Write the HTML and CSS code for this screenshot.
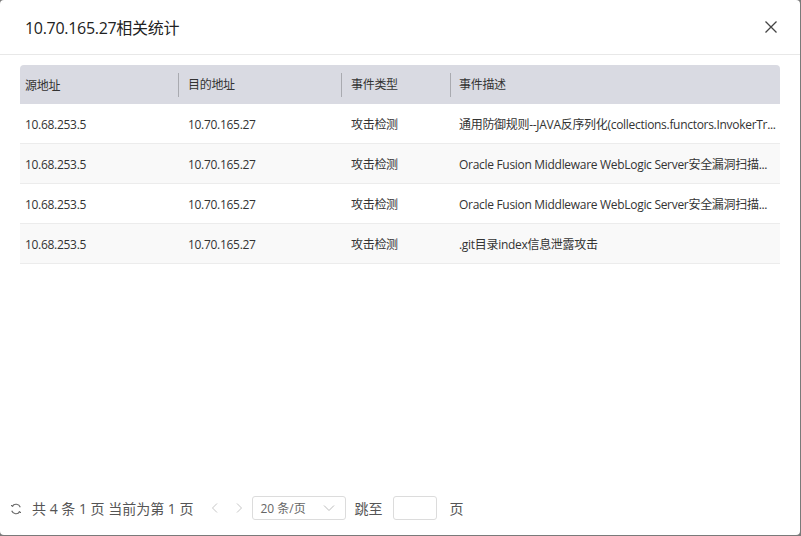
FILE: index.html
```html
<!DOCTYPE html>
<html lang="zh">
<head>
<meta charset="utf-8">
<link rel="stylesheet" href="styles.css">
</head>
<body>
<div class="modal">
  <div class="modal-header">
    <div class="modal-title">10.70.165.27相关统计</div>
    <svg class="close" width="14" height="14" viewBox="0 0 14 14"><path d="M1.5 1.5 L12.5 12.5 M12.5 1.5 L1.5 12.5" stroke="#444" stroke-width="1.3" fill="none"/></svg>
  </div>
  <div class="modal-body">
    <div class="table">
      <div class="thead">
        <div class="cell c1">源地址</div>
        <div class="cell c2 sep">目的地址</div>
        <div class="cell c3 sep">事件类型</div>
        <div class="cell c4 sep">事件描述</div>
      </div>
      <div class="row">
        <div class="cell c1">10.68.253.5</div>
        <div class="cell c2">10.70.165.27</div>
        <div class="cell c3">攻击检测</div>
        <div class="cell c4">通用防御规则--JAVA反序列化(collections.functors.InvokerTr...</div>
      </div>
      <div class="row alt">
        <div class="cell c1">10.68.253.5</div>
        <div class="cell c2">10.70.165.27</div>
        <div class="cell c3">攻击检测</div>
        <div class="cell c4">Oracle Fusion Middleware WebLogic Server安全漏洞扫描...</div>
      </div>
      <div class="row">
        <div class="cell c1">10.68.253.5</div>
        <div class="cell c2">10.70.165.27</div>
        <div class="cell c3">攻击检测</div>
        <div class="cell c4">Oracle Fusion Middleware WebLogic Server安全漏洞扫描...</div>
      </div>
      <div class="row alt">
        <div class="cell c1">10.68.253.5</div>
        <div class="cell c2">10.70.165.27</div>
        <div class="cell c3">攻击检测</div>
        <div class="cell c4">.git目录index信息泄露攻击</div>
      </div>
    </div>
  </div>
  <div class="footer">
    <svg class="refresh" width="12" height="12" viewBox="0 0 12 12"><path d="M10.3 4.2 A4.6 4.6 0 0 0 2.2 3.2" stroke="#666" stroke-width="1.1" fill="none"/><path d="M1.7 7.8 A4.6 4.6 0 0 0 9.8 8.8" stroke="#666" stroke-width="1.1" fill="none"/><path d="M1.2 2 L2.1 3.5 L3.6 2.8" stroke="#666" stroke-width="1" fill="none"/><path d="M10.8 10 L9.9 8.5 L8.4 9.2" stroke="#666" stroke-width="1" fill="none"/></svg>
    <span class="total">共 4 条 1 页 当前为第 1 页</span>
    <svg class="arrow" width="8" height="12" viewBox="0 0 8 12"><path d="M6 1.5 L1.5 6 L6 10.5" stroke="#c6c6c6" stroke-width="1" fill="none"/></svg>
    <svg class="arrow" width="8" height="12" viewBox="0 0 8 12"><path d="M2 1.5 L6.5 6 L2 10.5" stroke="#c6c6c6" stroke-width="1" fill="none"/></svg>
    <div class="select">
      <span>20 条/页</span>
      <svg width="12" height="8" viewBox="0 0 12 8"><path d="M1 1.5 L6 6.5 L11 1.5" stroke="#bbb" stroke-width="1" fill="none"/></svg>
    </div>
    <span class="jump">跳至</span>
    <div class="input"></div>
    <span class="page">页</span>
  </div>
</div>
</body>
</html>
```
FILE: styles.css
```css
html, body {
  margin: 0;
  padding: 0;
}
body {
  background: #7a7a7a;
  width: 801px;
  height: 536px;
  font-family: "Open Sans", "Noto Sans CJK SC", sans-serif;
  color: #333;
}
.modal {
  width: 800px;
  height: 535px;
  background: #fff;
  border-radius: 4px;
  display: flex;
  flex-direction: column;
  overflow: hidden;
}
.modal-header {
  height: 54px;
  border-bottom: 1px solid #e8e8e8;
  display: flex;
  align-items: center;
  justify-content: space-between;
  padding: 0 22px 0 25px;
}
.modal-title {
  font-size: 16px;
  color: #222;
  margin-top: -1px;
  letter-spacing: -0.3px;
}
.close {
  display: block;
}
.modal-body {
  flex: 1;
  padding: 10px 20px 0 20px;
}
.table {
  font-size: 12px;
  letter-spacing: -0.3px;
}
.thead {
  display: flex;
  height: 39px;
  background: #d9dae2;
  border-radius: 4px 4px 0 0;
  align-items: center;
}
.row {
  display: flex;
  height: 39px;
  align-items: center;
  border-bottom: 1px solid #ececec;
  padding-top: 1px;
  box-sizing: border-box;
  height: 40px;
}
.row.alt {
  background: #f9f9f9;
}
.cell {
  white-space: nowrap;
  box-sizing: border-box;
}
.c1 { width: 158px; padding-left: 5px; }
.c2 { width: 163px; padding-left: 10px; }
.c3 { width: 109px; padding-left: 10px; }
.c4 { width: 330px; padding-left: 9px; }
.sep {
  border-left: 1px solid #a9aab0;
  line-height: 24px;
  padding-left: 9px;
}
.c4.sep { padding-left: 8px; }
.footer {
  height: 24px;
  display: flex;
  align-items: center;
  padding: 0 0 15px 10px;
  font-size: 14px;
  color: #555;
}
.refresh {
  display: block;
  margin-right: 10px;
  margin-top: 2px;
}
.total {
  margin-right: 18px;
}
.arrow {
  display: block;
  margin-right: 16px;
}
.arrow + .arrow {
  margin-right: 9px;
}
.select {
  width: 94px;
  height: 24px;
  box-sizing: border-box;
  border: 1px solid #dcdcdc;
  border-radius: 3px;
  display: flex;
  align-items: center;
  justify-content: space-between;
  padding: 0 10px 0 7px;
  font-size: 12px;
  color: #666;
  margin-right: 8px;
}
.select svg { display: block; }
.jump {
  margin-right: 11px;
}
.input {
  width: 44px;
  height: 24px;
  box-sizing: border-box;
  border: 1px solid #dcdcdc;
  border-radius: 3px;
  margin-right: 12px;
}
```
